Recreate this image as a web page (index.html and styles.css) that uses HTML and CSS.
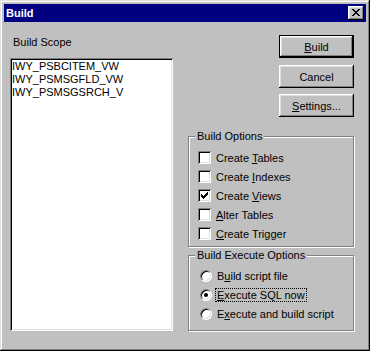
FILE: index.html
```html
<!DOCTYPE html>
<html lang="en">
<head>
    <meta charset="UTF-8">
    <title>Build</title>
    <link rel="stylesheet" href="styles.css">
</head>
<body>

    <div class="window">
        <div class="titlebar">
            <span class="title">Build</span>
            <button class="close">
                <svg width="16" height="14" viewBox="0 0 16 14">
                    <path d="M4 3h2v1h-2z M10 3h2v1h-2z M5 4h2v1h-2z M9 4h2v1h-2z M6 5h2v1h-2z M8 5h2v1h-2z M7 6h2v1h-2z M6 7h2v1h-2z M8 7h2v1h-2z M5 8h2v1h-2z M9 8h2v1h-2z M4 9h2v1h-2z M10 9h2v1h-2z" fill="#000"/>
                </svg>
            </button>
        </div>

        <div class="content">
            <div class="scope">
                <div class="scope-label">Build Scope</div>
                <ul class="listbox">
                    <li>IWY_PSBCITEM_VW</li>
                    <li>IWY_PSMSGFLD_VW</li>
                    <li>IWY_PSMSGSRCH_V</li>
                </ul>
            </div>

            <div class="side">
                <div class="buttons">
                    <button class="btn default"><u>B</u>uild</button>
                    <button class="btn">Cancel</button>
                    <button class="btn"><u>S</u>ettings...</button>
                </div>

                <fieldset class="group options">
                    <legend>Build Options</legend>
                    <div class="row"><span class="box"></span><span class="text">Create <u>T</u>ables</span></div>
                    <div class="row"><span class="box"></span><span class="text">Create <u>I</u>ndexes</span></div>
                    <div class="row">
                        <span class="box">
                            <svg width="13" height="13" viewBox="0 0 13 13">
                                <path d="M3 5h1v3h-1z M4 6h1v3h-1z M5 7h1v3h-1z M6 6h1v3h-1z M7 5h1v3h-1z M8 4h1v3h-1z M9 3h1v3h-1z" fill="#000"/>
                            </svg>
                        </span>
                        <span class="text">Create <u>V</u>iews</span>
                    </div>
                    <div class="row"><span class="box"></span><span class="text"><u>A</u>lter Tables</span></div>
                    <div class="row"><span class="box"></span><span class="text"><u>C</u>reate Trigger</span></div>
                </fieldset>

                <fieldset class="group execute">
                    <legend>Build Execute Options</legend>
                    <div class="row"><span class="radio"></span><span class="text">B<u>u</u>ild script file</span></div>
                    <div class="row"><span class="radio"><span class="dot"></span></span><span class="text focus"><u>E</u>xecute SQL now</span></div>
                    <div class="row"><span class="radio"></span><span class="text">E<u>x</u>ecute and build script</span></div>
                </fieldset>
            </div>
        </div>
    </div>

</body>
</html>
```

FILE: styles.css
```css
*{
    margin: 0;
    padding: 0;
    box-sizing: border-box;
}
body{
    background-color: #c0c0c0;
    font: 11px "Liberation Sans", Arial, sans-serif;
    color: #000;
}
.window{
    width: 370px;
    height: 351px;
    padding: 4px;
    background-color: #c0c0c0;
    box-shadow: inset -1px -1px #000, inset 1px 1px #dfdfdf, inset -2px -2px #808080, inset 2px 2px #fff;
}
.titlebar{
    display: flex;
    align-items: center;
    justify-content: space-between;
    height: 18px;
    padding: 0 2px;
    background-color: #000080;
}
.title{
    color: #fff;
    font-weight: bold;
    line-height: 18px;
}
.close{
    display: flex;
    width: 16px;
    height: 14px;
    border: none;
    background-color: #c0c0c0;
    box-shadow: inset -1px -1px #000, inset 1px 1px #fff, inset -2px -2px #808080, inset 2px 2px #dfdfdf;
}
.content{
    display: flex;
    gap: 15px;
    padding: 13px 11px 0 6px;
}
.scope-label{
    margin-top: 1px;
    padding-left: 3px;
    line-height: 13px;
}
.listbox{
    list-style: none;
    margin-top: 9px;
    width: 163px;
    height: 273px;
    padding: 2px 0 0 2px;
    background-color: #fff;
    box-shadow: inset 1px 1px #808080, inset -1px -1px #fff, inset 2px 2px #000, inset -2px -2px #dfdfdf;
}
.listbox li{
    line-height: 13px;
    white-space: nowrap;
}
.side{
    display: flex;
    flex-direction: column;
    width: 167px;
}
.buttons{
    display: flex;
    flex-direction: column;
    align-items: flex-end;
    gap: 6px;
    padding-right: 1px;
}
.btn{
    width: 75px;
    height: 23px;
    border: none;
    font: inherit;
    color: #000;
    background-color: #c0c0c0;
    box-shadow: inset -1px -1px #000, inset 1px 1px #fff, inset -2px -2px #808080, inset 2px 2px #dfdfdf;
}
.btn.default{
    margin-bottom: 1px;
    border: 1px solid #000;
}
.group{
    width: 166px;
    border: 1px solid #808080;
    padding: 5px 0 3px 9px;
    box-shadow: 1px 1px #fff, inset 1px 1px #fff;
}
.group legend{
    margin-left: -3px;
    padding: 0 2px;
    line-height: 13px;
    background-color: #c0c0c0;
}
.options{
    margin-top: 13px;
}
.execute{
    margin-top: 2px;
    padding-top: 4px;
    padding-bottom: 7px;
}
.row{
    display: flex;
    align-items: center;
    height: 19px;
}
.box{
    display: flex;
    width: 13px;
    height: 13px;
    background-color: #fff;
    box-shadow: inset 1px 1px #808080, inset -1px -1px #fff, inset 2px 2px #000, inset -2px -2px #dfdfdf;
}
.radio{
    display: flex;
    align-items: center;
    justify-content: center;
    margin-left: 2px;
    width: 12px;
    height: 12px;
    border-radius: 50%;
    border: 1px solid;
    border-color: #808080 #fff #fff #808080;
    background-color: #fff;
    box-shadow: inset 1px 1px #000, inset -1px -1px #dfdfdf;
}
.dot{
    width: 4px;
    height: 4px;
    border-radius: 50%;
    background-color: #000;
}
.text{
    margin-left: 3px;
    padding: 0 1px;
    border: 1px dotted transparent;
    line-height: 12px;
    white-space: nowrap;
}
.text.focus{
    border-color: #000;
}
```
